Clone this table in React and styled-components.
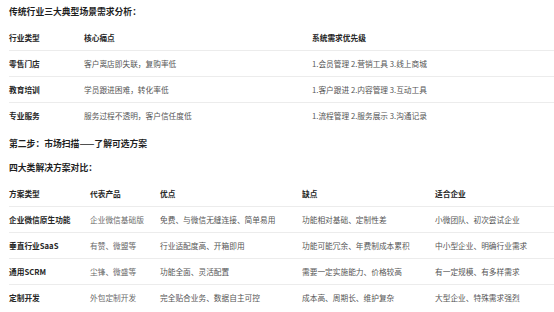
import React from "react";
import styled, { createGlobalStyle } from "styled-components";

const Global = createGlobalStyle`
  html, body { margin: 0; padding: 0; background: #fff; }
  body {
    font-family: "Noto Sans CJK SC", "Noto Sans", "Liberation Sans", sans-serif;
    color: #333;
    overflow: hidden;
  }
`;

const Page = styled.div`
  width: 554px;
  height: 312px;
  overflow: hidden;
  padding: 6px 0 0 9px;
  box-sizing: border-box;
  display: flex;
  flex-direction: column;
`;

const Heading = styled.div`
  font-size: 8.8px;
  line-height: 12px;
  font-weight: 700;
  color: #1f1f1f;
  white-space: nowrap;
  margin-top: ${(p) => p.$mt || 0}px;
`;

const Table = styled.div`
  display: flex;
  flex-direction: column;
  width: 560px;
  margin-top: ${(p) => p.$mt || 0}px;
`;

const Row = styled.div`
  display: grid;
  grid-template-columns: ${(p) => p.$cols};
  align-items: center;
  height: 25px;
  border-bottom: ${(p) => (p.$last ? "none" : "1px solid #ececec")};
`;

const Cell = styled.div`
  font-size: 7.7px;
  line-height: 11px;
  white-space: nowrap;
  font-weight: ${(p) => (p.$bold ? 700 : 400)};
  color: ${(p) => (p.$bold ? "#262626" : p.$light ? "#6a6a6a" : "#555")};
`;

const t1Cols = "75px 228px 1fr";
const t1Head = ["行业类型", "核心痛点", "系统需求优先级"];
const t1Rows = [
  ["零售门店", "客户离店即失联，复购率低", "1.会员管理 2.营销工具 3.线上商城"],
  ["教育培训", "学员跟进困难，转化率低", "1.客户跟进 2.内容管理 3.互动工具"],
  ["专业服务", "服务过程不透明，客户信任度低", "1.流程管理 2.服务展示 3.沟通记录"],
];

const t2Cols = "81px 70px 142px 133px 1fr";
const t2Head = ["方案类型", "代表产品", "优点", "缺点", "适合企业"];
const t2Rows = [
  ["企业微信原生功能", "企业微信基础版", "免费、与微信无缝连接、简单易用", "功能相对基础、定制性差", "小微团队、初次尝试企业"],
  ["垂直行业SaaS", "有赞、微盟等", "行业适配度高、开箱即用", "功能可能冗余、年费制成本累积", "中小型企业、明确行业需求"],
  ["通用SCRM", "尘锋、微盛等", "功能全面、灵活配置", "需要一定实施能力、价格较高", "有一定规模、有多样需求"],
  ["定制开发", "外包定制开发", "完全贴合业务、数据自主可控", "成本高、周期长、维护复杂", "大型企业、特殊需求强烈"],
];

function DataTable({ cols, head, rows, mt }) {
  return (
    <Table $mt={mt}>
      <Row $cols={cols}>
        {head.map((h) => (
          <Cell key={h} $bold>
            {h}
          </Cell>
        ))}
      </Row>
      {rows.map((r, i) => (
        <Row key={i} $cols={cols} $last={i === rows.length - 1}>
          {r.map((c, j) => (
            <Cell key={j} $bold={j === 0} $light={j === 1 && cols === t2Cols}>
              {c}
            </Cell>
          ))}
        </Row>
      ))}
    </Table>
  );
}

export default function App() {
  return (
    <>
      <Global />
      <Page>
        <Heading>传统行业三大典型场景需求分析：</Heading>
        <DataTable cols={t1Cols} head={t1Head} rows={t1Rows} mt={7} />
        <Heading $mt={10}>第二步：市场扫描——了解可选方案</Heading>
        <Heading $mt={12}>四大类解决方案对比：</Heading>
        <DataTable cols={t2Cols} head={t2Head} rows={t2Rows} mt={7} />
      </Page>
    </>
  );
}
